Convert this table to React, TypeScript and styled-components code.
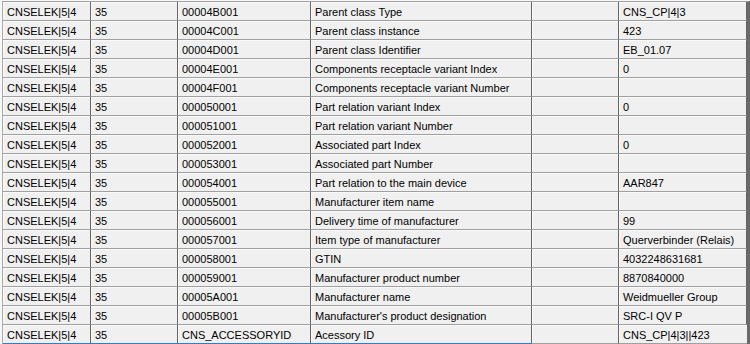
import React from "react";
import styled, { createGlobalStyle } from "styled-components";

const Global = createGlobalStyle`
  html, body { margin: 0; padding: 0; background: #f0f0f0; }
  body { font-family: "Liberation Sans", Arial, sans-serif; }
`;

const Frame = styled.div`
  width: 750px;
  height: 344px;
  overflow: hidden;
  box-sizing: border-box;
  padding: 1px 0 0 2px;
  background: #f7f7f7;
  display: flex;
`;

const Grid = styled.div`
  flex: 1;
  display: grid;
  grid-template-columns: 88px 87px 133px 221px 87px 128px;
  grid-auto-rows: 19px;
  align-content: start;
  border-left: 1px solid #a9a9a9;
  border-right: 3px solid #6a6a6a;
  border-top: 1px solid #a0a0a0;
  background: #f0f0f0;
`;

const Cell = styled.div<{ $accent?: boolean }>`
  box-sizing: border-box;
  border-right: 1px solid #646464;
  border-bottom: 1px solid ${(p) => (p.$accent ? "#2f7bd6" : "#a0a0a0")};
  box-shadow: inset 1px 1px 0 #fafafa;
  padding: 3px 0 0 4px;
  font-size: 11px;
  line-height: 15px;
  color: #000;
  white-space: nowrap;
  overflow: hidden;
  &:last-child { border-right: none; }
`;

type Row = [string, string, string, string, string, string];

const rows: Row[] = [
  ["CNSELEK|5|4", "35", "00004B001", "Parent class Type", "", "CNS_CP|4|3"],
  ["CNSELEK|5|4", "35", "00004C001", "Parent class instance", "", "423"],
  ["CNSELEK|5|4", "35", "00004D001", "Parent class Identifier", "", "EB_01.07"],
  ["CNSELEK|5|4", "35", "00004E001", "Components receptacle variant Index", "", "0"],
  ["CNSELEK|5|4", "35", "00004F001", "Components receptacle variant Number", "", ""],
  ["CNSELEK|5|4", "35", "000050001", "Part relation variant Index", "", "0"],
  ["CNSELEK|5|4", "35", "000051001", "Part relation variant Number", "", ""],
  ["CNSELEK|5|4", "35", "000052001", "Associated part Index", "", "0"],
  ["CNSELEK|5|4", "35", "000053001", "Associated part Number", "", ""],
  ["CNSELEK|5|4", "35", "000054001", "Part relation to the main device", "", "AAR847"],
  ["CNSELEK|5|4", "35", "000055001", "Manufacturer item name", "", ""],
  ["CNSELEK|5|4", "35", "000056001", "Delivery time of manufacturer", "", "99"],
  ["CNSELEK|5|4", "35", "000057001", "Item type of manufacturer", "", "Querverbinder (Relais)"],
  ["CNSELEK|5|4", "35", "000058001", "GTIN", "", "4032248631681"],
  ["CNSELEK|5|4", "35", "000059001", "Manufacturer product number", "", "8870840000"],
  ["CNSELEK|5|4", "35", "00005A001", "Manufacturer name", "", "Weidmueller Group"],
  ["CNSELEK|5|4", "35", "00005B001", "Manufacturer's product designation", "", "SRC-I QV P"],
  ["CNSELEK|5|4", "35", "CNS_ACCESSORYID", "Acessory ID", "", "CNS_CP|4|3||423"],
];

export default function App() {
  return (
    <>
      <Global />
      <Frame>
        <Grid>
          {rows.map((r, i) =>
            r.map((c, j) => (
              <Cell key={`${i}-${j}`} $accent={i === rows.length - 1 && j < 4}>
                {c}
              </Cell>
            ))
          )}
        </Grid>
      </Frame>
    </>
  );
}
